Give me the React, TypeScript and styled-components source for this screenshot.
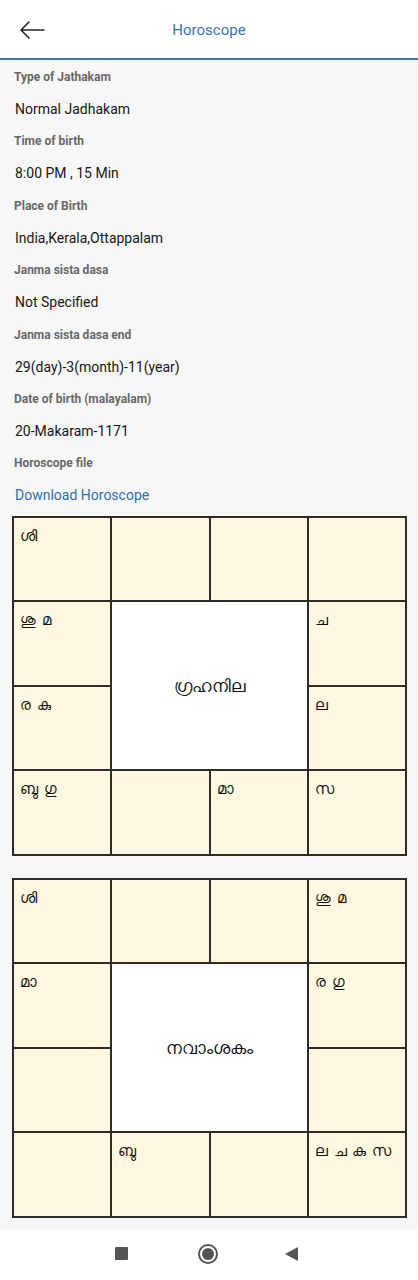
import React from "react";
import styled, { createGlobalStyle } from "styled-components";

const GlobalStyle = createGlobalStyle`
  html, body {
    margin: 0;
    padding: 0;
    background: #ffffff;
  }
  body {
    font-family: Roboto, "Noto Sans", "DejaVu Sans", sans-serif;
  }
`;

interface Field {
  label: string;
  value: string;
  link?: boolean;
}

const FIELDS: Field[] = [
  { label: "Type of Jathakam", value: "Normal Jadhakam" },
  { label: "Time of birth", value: "8:00 PM , 15 Min" },
  { label: "Place of Birth", value: "India,Kerala,Ottappalam" },
  { label: "Janma sista dasa", value: "Not Specified" },
  { label: "Janma sista dasa end", value: "29(day)-3(month)-11(year)" },
  { label: "Date of birth (malayalam)", value: "20-Makaram-1171" },
  { label: "Horoscope file", value: "Download Horoscope", link: true },
];

// 12 houses clockwise from top-left, placed on the 4x4 ring
const RING: [number, number][] = [
  [1, 1], [1, 2], [1, 3], [1, 4],
  [2, 4], [3, 4], [4, 4], [4, 3],
  [4, 2], [4, 1], [3, 1], [2, 1],
];

interface Chart {
  title: string;
  houses: string[];
}

const CHARTS: Chart[] = [
  {
    title: "ഗ്രഹനില",
    houses: ["ശി", "", "", "", "ച", "ല", "സ", "മാ", "", "ബു ഗു", "ര കു", "ശു മ"],
  },
  {
    title: "നവാംശകം",
    houses: ["ശി", "", "", "ശു മ", "ര ഗു", "", "ല ച കു സ", "", "ബു", "", "", "മാ"],
  },
];

export default function App() {
  return (
    <>
      <GlobalStyle />
      <S.Screen>
        <S.Header>
          <S.Back aria-label="back">
            <svg width="26" height="20" viewBox="0 0 26 20" fill="none">
              <path
                d="M25 10H2M10 2L2 10L10 18"
                stroke="#222"
                strokeWidth="1.6"
                strokeLinecap="round"
                strokeLinejoin="round"
              />
            </svg>
          </S.Back>
          <S.Title>Horoscope</S.Title>
        </S.Header>

        <S.Body>
          {FIELDS.map((f) => (
            <S.Field key={f.label}>
              <S.Label>{f.label}</S.Label>
              {f.link ? <S.Link>{f.value}</S.Link> : <S.Value>{f.value}</S.Value>}
            </S.Field>
          ))}

          {CHARTS.map((chart) => (
            <S.Chart key={chart.title}>
              {chart.houses.map((h, i) => (
                <S.House key={i} row={RING[i][0]} col={RING[i][1]}>
                  {h}
                </S.House>
              ))}
              <S.Center>{chart.title}</S.Center>
            </S.Chart>
          ))}
        </S.Body>

        <S.NavBar>
          <S.NavSquare />
          <S.NavHome />
          <S.NavBack />
        </S.NavBar>
      </S.Screen>
    </>
  );
}

const S = {
  Screen: styled.div`
    width: 418px;
    min-height: 1280px;
    display: flex;
    flex-direction: column;
    background: #f7f7f7;
  `,
  Header: styled.header`
    height: 58px;
    background: #ffffff;
    border-bottom: 2px solid #3f77aa;
    display: flex;
    align-items: center;
    position: relative;
  `,
  Back: styled.button`
    background: none;
    border: 0;
    padding: 0;
    margin-left: 19px;
    margin-top: 2px;
    display: flex;
  `,
  Title: styled.div`
    position: absolute;
    left: 0;
    right: 0;
    text-align: center;
    pointer-events: none;
    font-size: 15px;
    color: #3a76b0;
    margin-top: 2px;
  `,
  Body: styled.main`
    flex: 1;
    display: flex;
    flex-direction: column;
    padding: 1px 11px 11px 12px;
  `,
  Field: styled.div`
    display: flex;
    flex-direction: column;
  `,
  Label: styled.div`
    height: 32px;
    line-height: 32px;
    padding-left: 2px;
    font-size: 12px;
    font-weight: 700;
    color: #686868;
  `,
  Value: styled.div`
    height: 32.4px;
    line-height: 32px;
    padding-left: 3px;
    font-size: 14px;
    color: #161616;
  `,
  Link: styled.div`
    height: 32.4px;
    line-height: 32px;
    padding-left: 3px;
    font-size: 14px;
    color: #2d6fb0;
  `,
  Chart: styled.section`
    margin-top: 4px;
    margin-bottom: 17px;
    display: grid;
    grid-template-columns: repeat(4, 1fr);
    grid-template-rows: repeat(4, 82.5px);
    gap: 2px;
    padding: 2px;
    background: #2e2c28;
    width: 391px;
    & + & {
      margin-top: 5px;
      margin-bottom: 0;
    }
  `,
  House: styled.div<{ row: number; col: number }>`
    grid-row: ${(p) => p.row};
    grid-column: ${(p) => p.col};
    background: #fff8e0;
    padding: 7px 6px;
    font-family: "Noto Sans", "DejaVu Sans", sans-serif;
    font-size: 14.5px;
    color: #111;
    word-spacing: 2px;
  `,
  Center: styled.div`
    grid-row: 2 / span 2;
    grid-column: 2 / span 2;
    background: #ffffff;
    display: flex;
    align-items: center;
    justify-content: center;
    font-family: "Noto Sans", "DejaVu Sans", sans-serif;
    font-size: 17px;
    color: #111;
  `,
  NavBar: styled.nav`
    height: 50px;
    background: #ffffff;
    display: flex;
    align-items: center;
    justify-content: center;
    padding: 0 6px 2px 0;
  `,
  NavSquare: styled.span`
    width: 13px;
    height: 13px;
    background: #555;
    border-radius: 1px;
    margin-right: 70px;
  `,
  NavHome: styled.span`
    width: 16px;
    height: 16px;
    border-radius: 50%;
    border: 2px solid #555;
    display: flex;
    align-items: center;
    justify-content: center;
    margin-right: 67px;
    &::after {
      content: "";
      width: 12px;
      height: 12px;
      border-radius: 50%;
      background: #555;
    }
  `,
  NavBack: styled.span`
    width: 0;
    height: 0;
    border-top: 7px solid transparent;
    border-bottom: 7px solid transparent;
    border-right: 13px solid #555;
  `,
};
